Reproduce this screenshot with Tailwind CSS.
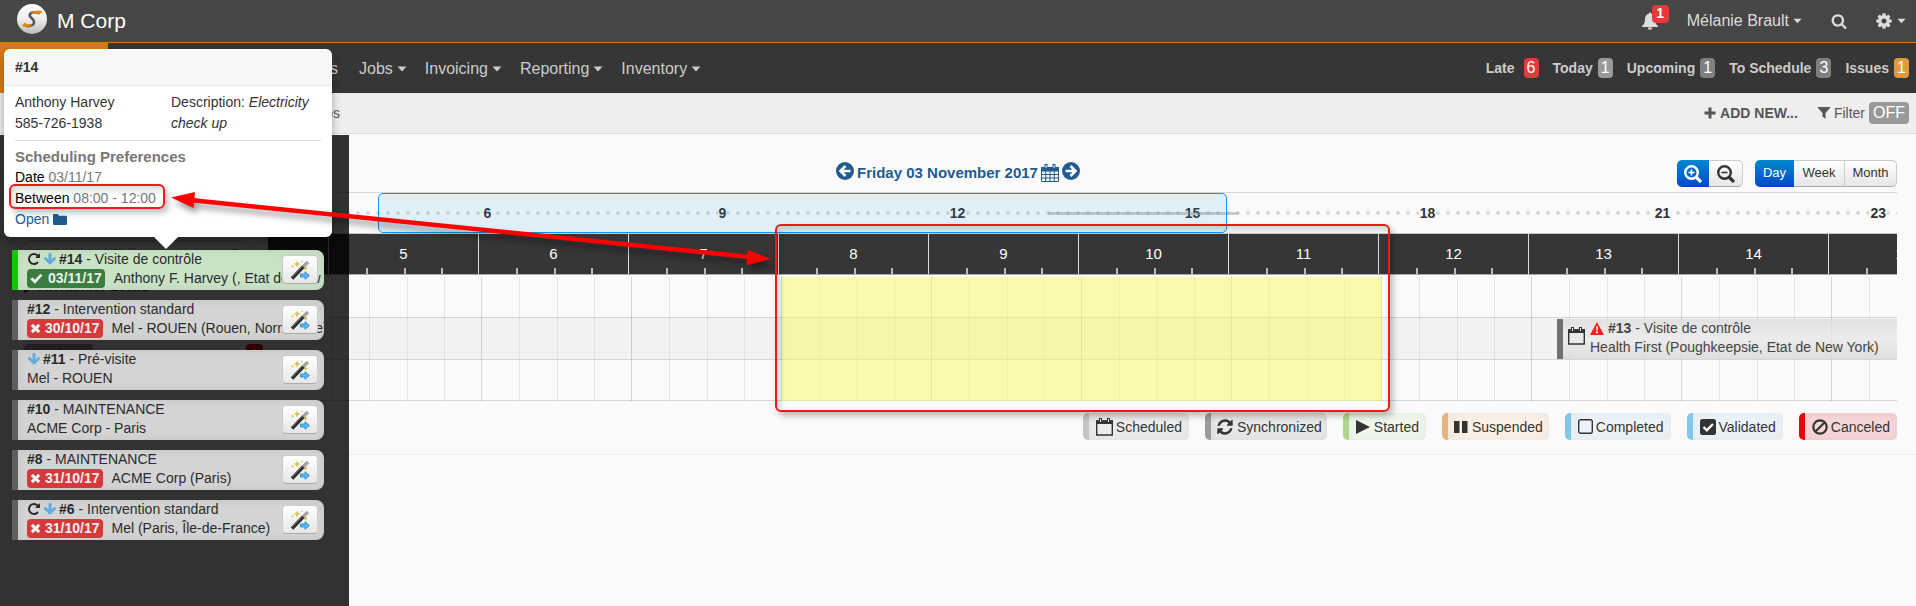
<!DOCTYPE html>
<html lang="en">
<head>
  <meta charset="UTF-8" />
  <meta name="viewport" content="width=device-width, initial-scale=1.0" />
  <title>M Corp - Scheduler</title>
  <script src="https://cdn.jsdelivr.net/npm/@tailwindcss/browser@4"></script>
</head>
<body class="relative min-h-screen overflow-x-hidden bg-[#fafafa] font-['Liberation_Sans',sans-serif] text-sm text-[#333]">

  <!-- Icons -->
  <svg class="absolute size-0">
    <symbol id="i-search" viewBox="0 0 1792 1792"><path d="M1216 832q0-185-131.5-316.5t-316.5-131.5-316.5 131.5-131.5 316.5 131.5 316.5 316.5 131.5 316.5-131.5 131.5-316.5zm512 832q0 52-38 90t-90 38q-54 0-90-38l-343-342q-179 124-399 124-143 0-273.5-55.5t-225-150-150-225-55.5-273.5 55.5-273.5 150-225 225-150 273.5-55.5 273.5 55.5 225 150 150 225 55.5 273.5q0 220-124 399l343 343q37 37 37 90z"/></symbol>
    <symbol id="i-cog" viewBox="0 0 1792 1792"><path d="M1152 896q0-106-75-181t-181-75-181 75-75 181 75 181 181 75 181-75 75-181zm512-109v222q0 12-8 23t-20 13l-185 28q-19 54-39 91 35 50 107 138 10 12 10 25t-9 23q-27 37-99 108t-94 71q-12 0-26-9l-138-108q-44 23-91 38-16 136-29 186-7 28-36 28h-222q-14 0-24.5-8.5t-11.5-21.5l-28-184q-49-16-90-37l-141 107q-10 9-25 9-14 0-25-11-126-114-165-168-7-10-7-23 0-12 8-23 15-21 51-66.5t54-70.5q-27-50-41-99l-183-27q-13-2-21-12.5t-8-23.5v-222q0-12 8-23t19-13l186-28q14-46 39-92-40-57-107-138-10-12-10-24 0-10 9-23 26-36 98.5-107.5t94.5-71.5q13 0 26 10l138 107q44-23 91-38 16-136 29-186 7-28 36-28h222q14 0 24.5 8.5t11.5 21.5l28 184q49 16 90 37l142-107q9-9 24-9 13 0 25 10 129 119 165 170 7 8 7 22 0 12-8 23-15 21-51 66.5t-54 70.5q26 50 41 98l183 28q13 2 21 12.5t8 23.5z"/></symbol>
    <symbol id="i-refresh" viewBox="0 0 1792 1792"><path d="M1639 1056q0 5-1 7-64 268-268 434.5t-478 166.5q-146 0-282.5-55t-243.5-157l-129 129q-19 19-45 19t-45-19-19-45v-448q0-26 19-45t45-19h448q26 0 45 19t19 45-19 45l-137 137q71 66 161 102t187 36q134 0 250-65t186-179q11-17 53-117 8-23 30-23h192q13 0 22.5 9.5t9.5 22.5zm25-800v448q0 26-19 45t-45 19h-448q-26 0-45-19t-19-45 19-45l138-138q-148-137-349-137-134 0-250 65t-186 179q-11 17-53 117-8 23-30 23h-199q-13 0-22.5-9.5t-9.5-22.5v-7q65-268 270-434.5t480-166.5q146 0 284 55.5t245 156.5l130-129q19-19 45-19t45 19 19 45z"/></symbol>
    <symbol id="i-repeat" viewBox="0 0 1792 1792"><path d="M1664 256v448q0 26-19 45t-45 19h-448q-42 0-59-40-17-39 14-69l138-138q-148-137-349-137-104 0-198.5 40.5t-163.5 109.5-109.5 163.5-40.5 198.5 40.5 198.5 109.5 163.5 163.5 109.5 198.5 40.5q119 0 225-52t179-147q7-10 23-12 15 0 25 9l137 138q9 8 9.5 20.5t-7.5 22.5q-109 132-264 204.5t-327 72.5q-156 0-298-61t-245-164-164-245-61-298 61-298 164-245 245-164 298-61q147 0 284.5 55.5t244.5 156.5l130-129q29-31 70-14 39 17 39 59z"/></symbol>
    <symbol id="i-down" viewBox="0 0 1792 1792"><path d="M1675 832q0 53-37 90l-651 652q-39 37-91 37-53 0-90-37l-651-652q-38-36-38-90 0-53 38-91l74-75q39-37 91-37 53 0 90 37l294 294v-704q0-52 38-90t90-38h128q52 0 90 38t38 90v704l294-294q37-37 90-37 52 0 91 37l75 75q37 39 37 91z"/></symbol>
    <symbol id="i-bell" viewBox="0 0 18 18"><path d="M9 0.500c.8 0 1.200.5 1.200 1.200C13 2.300 14 4.600 14 7c0 4 1.300 5.600 3 7v1H1v-1c1.700-1.400 3-3 3-7 0-2.400 1-4.700 3.800-5.300C7.800 1 8.200.5 9 .5zM6.800 15.500h4.400a2.200 2.200 0 0 1-4.400 0z"/></symbol>
    <symbol id="i-caret" viewBox="0 0 10 6"><path d="M0.500 0.500h9L5 5.500z"/></symbol>
    <symbol id="i-plus" viewBox="0 0 12 12"><path d="M4.500 0.500h3v4h4v3h-4v4h-3v-4h-4v-3h4z"/></symbol>
    <symbol id="i-filter" viewBox="0 0 12 12"><path d="M0 0h12v1L7.500 6v6l-3-2.500V6L0 1z"/></symbol>
    <symbol id="i-folder" viewBox="0 0 14 12"><path d="M1.200 0h3.600L6 1.700h6.600c.8 0 1.400.6 1.400 1.300v6.800c0 .7-.6 1.200-1.200 1.200H1.200C.5 11 0 10.500 0 9.800V1.200C0 .5.500 0 1.200 0z"/></symbol>
    <symbol id="i-check" viewBox="0 0 14 12"><path d="M1.500 6.300l3.700 3.700 7.200-7.600" fill="none" stroke="currentColor" stroke-width="3"/></symbol>
    <symbol id="i-times" viewBox="0 0 12 12"><path d="M2 2l8 8M10 2l-8 8" fill="none" stroke="currentColor" stroke-width="3.400"/></symbol>
    <symbol id="i-left" viewBox="0 0 18 18"><circle cx="9" cy="9" r="9"/><path d="M14.500 9H5M9.500 4L4.500 9l5 5" fill="none" stroke="#fafafa" stroke-width="2.600"/></symbol>
    <symbol id="i-right" viewBox="0 0 18 18"><circle cx="9" cy="9" r="9"/><path d="M3.500 9H13M8.500 4l5 5-5 5" fill="none" stroke="#fafafa" stroke-width="2.600"/></symbol>
    <symbol id="i-calendar" viewBox="0 0 18 18"><path d="M.5 3.500h17v14H.5zM.5 7h17M.5 10.500h17M.5 14h17M4.700 7v10M9 7v10M13.300 7v10" fill="none" stroke="currentColor"/><path d="M0 3h18v4H0zM3.500 0h3v5h-3zM11.500 0h3v5h-3z"/><path d="M4.500 1h1v3h-1zM12.500 1h1v3h-1z" fill="#fafafa"/></symbol>
    <symbol id="i-calendar-o" viewBox="0 0 17 18"><path d="M.7 3h15.600v14H.7z" fill="none" stroke="currentColor" stroke-width="1.400"/><path d="M0 2.500h17V6H0zM3 0h3v5H3zM11 0h3v5h-3z"/><path d="M4 1h1v3H4zM12 1h1v3h-1z" fill="#eee"/></symbol>
    <symbol id="i-play" viewBox="0 0 14 14"><path d="M0 0l14 7-14 7z"/></symbol>
    <symbol id="i-pause" viewBox="0 0 14 14"><path d="M0 1h5.500v12H0zM8 1h5.500v12H8z"/></symbol>
    <symbol id="i-square" viewBox="0 0 15 15"><rect x=".7" y=".7" width="13.600" height="13.600" rx="2" fill="none" stroke="currentColor" stroke-width="1.400"/></symbol>
    <symbol id="i-check-square" viewBox="0 0 16 16"><rect width="16" height="16" rx="2.500"/><path d="M3.500 8l3.300 3.300L13 5" fill="none" stroke="#fff" stroke-width="2.400"/></symbol>
    <symbol id="i-ban" viewBox="0 0 16 16"><path d="M8 1.300a6.700 6.700 0 1 0 0 13.400A6.700 6.700 0 1 0 8 1.300zM3.300 12.700l9.400-9.400" fill="none" stroke="currentColor" stroke-width="2.200"/></symbol>
    <symbol id="i-warning" viewBox="0 0 14 13"><path d="M7 0l7 13H0z" stroke-linejoin="round"/><path d="M6 4.500h2l-.4 4H6.400zM6 9.500h2v1.800H6z" fill="#fff"/></symbol>
    <symbol id="i-wand" viewBox="0 0 20 20"><path d="M7 .5l1 2.500 2.500 1L8 5 7 7.500 6 5 3.500 4 6 3zM15.500 6l.7 1.800 1.800.7-1.800.7-.7 1.800-.7-1.800-1.800-.7 1.800-.7zM2.500 4.500l.5 1.200 1.200.5-1.200.5-.5 1.200L2 6.700.8 6.200 2 5.700zM12 0l.4 1 1 .4-1 .4-.4 1-.4-1-1-.4 1-.4z" fill="#d6c24e"/><path d="M2 18.500L13.500 6.500" stroke="#2d2d2d" stroke-width="3.400"/><path d="M13.500 6.500L18 2" stroke="#aaa" stroke-width="3.400"/><path d="M2 17L16.500 2" stroke="#888" stroke-width=".8"/><path d="M10.500 14h4.500v-2.300l4.500 3.800-4.500 3.800V17h-4.500z" fill="#52bdf5" stroke="#2a7fc4" stroke-width=".8"/></symbol>
    <linearGradient id="lg" x2="0" y2="1"><stop stop-color="#fff"/><stop offset=".5" stop-color="#eee"/><stop offset="1" stop-color="#bbb"/></linearGradient>
    <symbol id="i-logo" viewBox="0 0 30 30"><circle cx="15" cy="15" r="15" fill="url(#lg)"/><path d="M22 9.500c-3-2-7-1.500-8.500 0-2 2 0 3.500 2 5.500 2.500 2.500 2 5-.5 6.200-2.500 1.300-5 1-7 .3" fill="none" stroke="#555" stroke-width="2.600"/><path d="M25 7.500c-3.500-1-8-.5-10.500 1.500 3-.6 5.500-.5 7.500 1.300zM5.500 21.500c3.500 1.500 7 1 9-.6-2.500.2-4.500 0-6.500-1.700z" fill="#e8850c" stroke="#e8850c"/></symbol>
  </svg>

  <header class="flex h-[43px] items-center border-b border-[#d87a16] bg-[#464646] text-base text-[#ddd]">
    <a href="#" class="ml-[17px] flex items-center gap-[10px] text-[21px] text-white">
      <svg class="mb-1 size-[30px]"><use href="#i-logo"/></svg>M Corp
    </a>
    <div class="mr-[10px] ml-auto flex items-center">
      <button class="relative" aria-label="Notifications">
        <svg class="size-[18px] fill-current"><use href="#i-bell"/></svg>
        <span class="absolute -top-[7px] left-[11px] h-[18px] w-[17px] rounded bg-[#e23b3b] text-center text-sm leading-[17px] font-bold text-white">1</span>
      </button>
      <button class="ml-7 flex items-center gap-1">Mélanie Brault <svg class="h-[6px] w-[9px] fill-current"><use href="#i-caret"/></svg></button>
      <button class="ml-7 pl-px" aria-label="Search"><svg class="size-4 fill-current"><use href="#i-search"/></svg></button>
      <button class="ml-7 flex items-center gap-1" aria-label="Settings">
        <svg class="size-[18px] fill-current"><use href="#i-cog"/></svg>
        <svg class="h-[6px] w-[9px] fill-current"><use href="#i-caret"/></svg>
      </button>
    </div>
  </header>

  <nav class="flex h-[50px] items-center bg-[#363636] text-base text-[#ccc]">
    <a href="#" aria-label="Home" class="h-full w-[108px] bg-[#d87a16]"></a>
    <div class="flex w-[230px] justify-end pt-0.5"><a href="#">Clients</a></div>
    <div class="ml-[21px] flex gap-[18px] pt-0.5">
      <button class="flex items-center gap-1">Jobs <svg class="h-[6px] w-[10px] fill-current"><use href="#i-caret"/></svg></button>
      <button class="flex items-center gap-1">Invoicing <svg class="h-[6px] w-[10px] fill-current"><use href="#i-caret"/></svg></button>
      <button class="flex items-center gap-1">Reporting <svg class="h-[6px] w-[10px] fill-current"><use href="#i-caret"/></svg></button>
      <button class="flex items-center gap-1">Inventory <svg class="h-[6px] w-[10px] fill-current"><use href="#i-caret"/></svg></button>
    </div>
    <div class="mr-[7px] ml-auto flex gap-[14px] text-sm font-bold">
      <a href="#" class="flex items-center gap-[9px]">Late <span class="h-5 w-[15px] rounded bg-[#e23b3b] text-center text-base leading-5 font-normal text-white">6</span></a>
      <a href="#" class="flex items-center gap-[5px]">Today <span class="h-5 w-[15px] rounded bg-[#999] text-center text-base leading-5 font-normal text-white">1</span></a>
      <a href="#" class="flex items-center gap-[5px]">Upcoming <span class="h-5 w-[15px] rounded bg-[#808080] text-center text-base leading-5 font-normal text-white">1</span></a>
      <a href="#" class="flex items-center gap-[5px]">To Schedule <span class="h-5 w-[15px] rounded bg-[#808080] text-center text-base leading-5 font-normal text-white">3</span></a>
      <a href="#" class="flex items-center gap-[5px]">Issues <span class="h-5 w-[15px] rounded bg-[#e5973c] text-center text-base leading-5 font-normal text-white">1</span></a>
    </div>
  </nav>

  <div class="flex h-[41px] items-center border-b border-[#ddd] bg-[#eee] text-[#555]">
    <div class="flex w-[340px] justify-end">Jobs</div>
    <div class="mr-[7px] ml-auto flex items-center gap-5">
      <button class="flex items-center gap-1 font-bold"><svg class="size-3 fill-current"><use href="#i-plus"/></svg>ADD NEW...</button>
      <button class="flex items-center gap-1"><svg class="size-3 fill-current"><use href="#i-filter"/></svg>Filter
        <span class="h-[22px] w-10 rounded bg-[#999] text-center text-base leading-[22px] text-white">OFF</span>
      </button>
    </div>
  </div>

  <main class="flex pr-[19px]">
    <!-- Technicians -->
    <aside class="w-[268px] shrink-0 pt-[106px] pl-5">
      <label class="flex h-[28px] w-[234px] items-center justify-between rounded-full border border-[#ccc] bg-[#fafafa] px-3">
        <input type="search" placeholder="Technician / Skill" aria-label="Technician or skill" class="w-full outline-none placeholder:text-[#999]" />
        <svg class="size-3 fill-current"><use href="#i-search"/></svg>
      </label>
      <div class="mt-2 pl-1 font-bold">▶ Alexander Lewis</div>
      <div class="mt-1 ml-1 h-5 w-16 rounded bg-[#999]"></div>
      <div class="mt-6 flex items-center justify-between pr-[5px] pl-1">
        <span class="rounded bg-[#999] px-1">plomberie</span>
        <span class="w-[17px] rounded bg-[#e00] text-center font-bold text-white">!</span>
      </div>
      <div class="mt-1 pl-1 font-bold">▶ Tech. TEST</div>
    </aside>

    <section class="min-w-0 flex-1">
      <!-- Date and view switch -->
      <div class="flex h-[58px] items-end pb-[5px]">
        <div class="flex h-8 flex-1 items-center justify-center gap-[3px] text-[15px] font-bold text-[#225b8e]">
          <button aria-label="Previous day"><svg class="size-[18px] fill-current"><use href="#i-left"/></svg></button>
          <span class="pt-1">Friday 03 November 2017</span>
          <button aria-label="Pick a date"><svg class="mt-1 size-[18px] fill-current"><use href="#i-calendar"/></svg></button>
          <button aria-label="Next day"><svg class="size-[18px] fill-current"><use href="#i-right"/></svg></button>
          <div class="w-[26px]"></div>
        </div>
        <div class="flex h-[27px] text-[13px]">
          <button aria-label="Zoom in" class="flex w-8 items-center justify-center rounded-l-[5px] bg-gradient-to-b from-[#08c] to-[#04c] text-white">
            <svg class="size-[18px]" viewBox="0 0 18 18" fill="none" stroke="currentColor"><circle cx="7.500" cy="7.500" r="6.300" stroke-width="2.400"/><path d="M12 12l5 5" stroke-width="3.200"/><path d="M4.500 7.500h6M7.500 4.500v6" stroke-width="1.600"/></svg>
          </button>
          <button aria-label="Zoom out" class="flex w-[34px] items-center justify-center rounded-r-[5px] border border-l-0 border-[#ccc] border-b-[#aaa] bg-gradient-to-b from-white to-[#e6e6e6]">
            <svg class="size-[18px]" viewBox="0 0 18 18" fill="none" stroke="currentColor"><circle cx="7.500" cy="7.500" r="6.300" stroke-width="2.400"/><path d="M12 12l5 5" stroke-width="3.200"/><path d="M4.500 7.500h6" stroke-width="1.600"/></svg>
          </button>
          <button class="ml-3 w-[39px] rounded-l-[5px] bg-gradient-to-b from-[#08c] to-[#04c] text-white">Day</button>
          <button class="w-[51px] border border-l-0 border-[#ccc] border-b-[#aaa] bg-gradient-to-b from-white to-[#e6e6e6]">Week</button>
          <button class="w-[52px] rounded-r-[5px] border border-l-0 border-[#ccc] border-b-[#aaa] bg-gradient-to-b from-white to-[#e6e6e6]">Month</button>
        </div>
      </div>

      <!-- Range selector -->
      <div class="relative h-[41px] border-t border-[#d5d5d5]">
        <div class="flex h-full items-center overflow-hidden bg-[radial-gradient(circle,#d5d5d5_1.5px,transparent_2px)] bg-[length:10px_10px] bg-[position:5px_15px] bg-repeat-x pl-[102px] font-bold">
          <span class="w-[235px] shrink-0 text-center"><span class="bg-[#fafafa] px-px">6</span></span>
          <span class="w-[235px] shrink-0 text-center"><span class="bg-[#fafafa] px-px">9</span></span>
          <span class="w-[235px] shrink-0 text-center"><span class="bg-[#fafafa] px-px">12</span></span>
          <span class="w-[235px] shrink-0 text-center"><span class="bg-[#fafafa] px-px">15</span></span>
          <span class="w-[235px] shrink-0 text-center"><span class="bg-[#fafafa] px-px">18</span></span>
          <span class="w-[235px] shrink-0 text-center"><span class="bg-[#fafafa] px-px">21</span></span>
          <span class="mr-[10px] ml-auto bg-[#fafafa] px-px">23</span>
        </div>
        <div class="absolute top-[19px] left-[780px] h-[3px] w-[190px] bg-[#999]/50"></div>
        <div class="absolute top-0 left-[110px] h-10 w-[849px] rounded-[5px] border border-[#0d96f2] bg-[#0d96f2]/10"></div>
      </div>

      <!-- Hours -->
      <div id="hours" class="flex h-[42px] overflow-hidden border-t border-b border-[#aaa] border-t-[#ccc] bg-[#363636] text-[15px] text-white"></div>

      <!-- Planning -->
      <div class="relative mt-[2px] overflow-hidden">
        <div class="h-[41px] border-b border-[#d9d3d3]"></div>
        <div class="h-[42px] border-b border-[#d6d6d6] bg-[#f2f2f2]"></div>
        <div class="h-[41px] border-b border-[#d6d6d6]"></div>
        <div id="grid" class="absolute inset-0 flex"></div>
        <div class="absolute top-0 left-[514px] h-full w-[600px] bg-[#faf95e]/50"></div>
        <a href="#" class="absolute top-[42px] right-0 left-[1289px] flex h-10 overflow-hidden border-l-6 border-[#707070] bg-gradient-to-b from-[#ddd]/80 via-[#eaeaea]/80 to-[#d9d9d9]/80 whitespace-nowrap">
          <svg class="mx-[5px] mt-2 h-[18px] w-[17px] shrink-0 fill-current"><use href="#i-calendar-o"/></svg>
          <div class="text-[#444]">
            <div class="flex h-[18px] items-center gap-1"><svg class="h-[13px] w-[14px] fill-[#f91c1c]"><use href="#i-warning"/></svg><span><b>#13</b> - Visite de contrôle</span></div>
            <div class="h-5 leading-5">Health First (Poughkeepsie, Etat de New York)</div>
          </div>
        </a>
      </div>

      <!-- Legend -->
      <ul class="mt-3 flex justify-end gap-4">
        <li class="flex h-[27px] items-center gap-[3px] rounded-[5px] border-l-6 border-[#c4c4c4] bg-[#ececec] px-[7px] shadow-[inset_0_0_12px_rgba(0,0,0,0.06)]"><svg class="h-[18px] w-[17px] fill-current"><use href="#i-calendar-o"/></svg>Scheduled</li>
        <li class="flex h-[27px] items-center gap-[3px] rounded-[5px] border-l-6 border-[#9c9c9c] bg-[#e8e8e8] px-[5px] shadow-[inset_0_0_12px_rgba(0,0,0,0.06)]"><svg class="size-[18px] fill-current"><use href="#i-refresh"/></svg>Synchronized</li>
        <li class="flex h-[27px] items-center gap-1 rounded-[5px] border-l-6 border-[#aed58c] bg-[#f0f7ec] px-[7px] shadow-[inset_0_0_12px_rgba(0,0,0,0.06)]"><svg class="size-[14px] fill-current"><use href="#i-play"/></svg>Started</li>
        <li class="flex h-[27px] items-center gap-1 rounded-[5px] border-l-6 border-[#e6b57e] bg-[#fbf1e9] px-[6px] shadow-[inset_0_0_12px_rgba(0,0,0,0.06)]"><svg class="size-[14px] fill-current"><use href="#i-pause"/></svg>Suspended</li>
        <li class="flex h-[27px] items-center gap-[3px] rounded-[5px] border-l-6 border-[#83c7e6] bg-[#ecf4fa] px-[7px] shadow-[inset_0_0_12px_rgba(0,0,0,0.06)]"><svg class="size-[15px]"><use href="#i-square"/></svg>Completed</li>
        <li class="flex h-[27px] items-center gap-[3px] rounded-[5px] border-l-6 border-[#83c7e6] bg-[#ecf4fa] px-[7px] shadow-[inset_0_0_12px_rgba(0,0,0,0.06)]"><svg class="size-4 fill-current"><use href="#i-check-square"/></svg>Validated</li>
        <li class="flex h-[27px] items-center gap-[3px] rounded-[5px] border-l-6 border-[#d50f0f] bg-[#f6d6d6] px-[7px] shadow-[inset_0_0_12px_rgba(0,0,0,0.06)]"><svg class="size-4"><use href="#i-ban"/></svg>Canceled</li>
      </ul>
    </section>
  </main>
  <hr class="mt-[14px] border-[#eee]" />

  <!-- Jobs to schedule, slides over the page -->
  <div id="jobs" class="absolute top-[135px] bottom-0 left-0 flex w-[349px] flex-col gap-[10px] bg-black/80 pt-[115px] pl-3"></div>

  <!-- Job popover -->
  <div class="absolute top-[49px] left-1 w-[328px] rounded-md bg-white shadow-[0_5px_10px_rgba(0,0,0,0.3)]">
    <h3 class="m-px flex h-[36px] items-center rounded-t-md border-b border-[#ebebeb] bg-[#f7f7f7] pb-0.5 pl-[10px] font-bold">#14</h3>
    <div class="px-[11px] pt-[5px] pb-[7px] leading-[21px]">
      <div class="grid grid-cols-2">
        <p>Anthony Harvey<br />585-726-1938</p>
        <p class="pl-[3px]">Description: <i>Electricity check up</i></p>
      </div>
      <hr class="mt-[6px] mb-[5px] border-[#ddd]" />
      <p class="text-[15px] font-bold text-[#777]">Scheduling Preferences</p>
      <p class="text-[#777]"><span class="text-black">Date</span> 03/11/17</p>
      <p class="text-[#777]"><span class="text-black">Between</span> 08:00 - 12:00</p>
      <a href="#" class="flex items-center gap-1 text-[#225b8e]">Open <svg class="h-3 w-[14px] fill-current"><use href="#i-folder"/></svg></a>
    </div>
    <svg class="absolute top-full left-[150px] h-[12px] w-[24px] fill-white" viewBox="0 0 24 12"><path d="M0 0h24L12 12z"/></svg>
  </div>

  <!-- Callouts -->
  <div class="absolute top-[184px] left-[9px] h-[25px] w-[156px] rounded-md border-2 border-[#f01818] shadow-[3px_4px_6px_rgba(0,0,0,0.25),inset_3px_4px_6px_rgba(0,0,0,0.15)]"></div>
  <div class="absolute top-[224px] left-[775px] h-[188px] w-[615px] rounded-md border-2 border-[#f01818] shadow-[3px_4px_6px_rgba(0,0,0,0.25),inset_3px_4px_6px_rgba(0,0,0,0.15)]"></div>
  <svg class="pointer-events-none absolute top-[180px] left-[165px] h-[100px] w-[620px] fill-[#f00] drop-shadow-[3px_5px_3px_rgba(0,0,0,0.4)]" viewBox="0 0 620 100">
    <path d="M25 20L585 77" stroke="#f00" stroke-width="4.500"/>
    <path d="M6 17.500L30 12L28.500 28zM606 79L583 70L581.500 85.500z"/>
  </svg>

  <script>
    const icons = {
      repeat: '<svg class="size-[14px] fill-current"><use href="#i-repeat"/></svg>',
      down: '<svg class="size-[14px] fill-[#62abdc]"><use href="#i-down"/></svg>',
    };

    const jobs = [
      { id: 14, name: "Visite de contrôle", client: "Anthony F. Harvey (, Etat de New York)", date: "03/11/17", ok: true, icons: ["repeat", "down"] },
      { id: 12, name: "Intervention standard", client: "Mel - ROUEN (Rouen, Normandie)", date: "30/10/17", icons: [] },
      { id: 11, name: "Pré-visite", client: "Mel - ROUEN", icons: ["down"] },
      { id: 10, name: "MAINTENANCE", client: "ACME Corp - Paris", icons: [] },
      { id: 8, name: "MAINTENANCE", client: "ACME Corp (Paris)", date: "31/10/17", icons: [] },
      { id: 6, name: "Intervention standard", client: "Mel (Paris, Île-de-France)", date: "31/10/17", icons: ["repeat", "down"] },
    ];

    function badge(job) {
      if (!job.date) return "";
      return job.ok
        ? `<span class="mr-[9px] flex h-[19px] items-center gap-[5px] rounded bg-[#3a7d3e] px-[3px] font-bold text-[#eee]"><svg class="h-3 w-[13px]"><use href="#i-check"/></svg>${job.date}</span>`
        : `<span class="mr-[9px] flex h-[19px] items-center gap-1 rounded bg-[#d43a3c] px-[3px] font-bold text-[#eee]"><svg class="size-[11px]"><use href="#i-times"/></svg>${job.date}</span>`;
    }

    document.getElementById("jobs").innerHTML = jobs.map(job => `
      <div class="relative h-10 w-[312px] overflow-hidden rounded-r-lg border-l-6 pl-[9px] whitespace-nowrap text-[#2b2b2b] ${job.ok ? "border-[#18c400] bg-[#cde7c9]/98" : "border-[#5f5f5f] bg-[#d7d7d7]/98"} shadow-[inset_0_0_10px_rgba(0,0,0,0.08)]">
        <div class="flex h-[18px] items-center gap-[2px]">${job.icons.map(i => icons[i]).join("")}<span><b>#${job.id}</b> - ${job.name}</span></div>
        <div class="flex h-5 items-center">${badge(job)}${job.client}</div>
        <button aria-label="Plan job #${job.id}" class="absolute top-[5px] right-[6px] flex h-[29px] w-9 items-center justify-center rounded border border-[#ccc] border-b-[#aaa] bg-gradient-to-b from-white to-[#e6e6e6]"><svg class="size-5"><use href="#i-wand"/></svg></button>
      </div>`).join("");

    const hours = [5, 6, 7, 8, 9, 10, 11, 12, 13, 14, 15];

    document.getElementById("hours").innerHTML = '<div class="w-[60px] shrink-0"></div>' + hours.map(h => `
      <div class="flex w-[150px] shrink-0 flex-col border-l border-[#ddd]">
        <div class="flex-1 pt-[9px] text-center leading-[22px]">${h}</div>
        <div class="grid h-[6px] grid-cols-4">
          <i></i><i class="border-l-2 border-[#bbb]"></i><i class="border-l-2 border-[#bbb]"></i><i class="border-l-2 border-[#bbb]"></i>
        </div>
      </div>`).join("");

    document.getElementById("grid").innerHTML = '<div class="w-[63px] shrink-0"></div>' + hours.map(() => `
      <div class="grid w-[150px] shrink-0 grid-cols-4 border-l border-black/15">
        <i></i><i class="border-l border-black/8"></i><i class="border-l border-black/8"></i><i class="border-l border-black/8"></i>
      </div>`).join("");
  </script>

</body>
</html>
